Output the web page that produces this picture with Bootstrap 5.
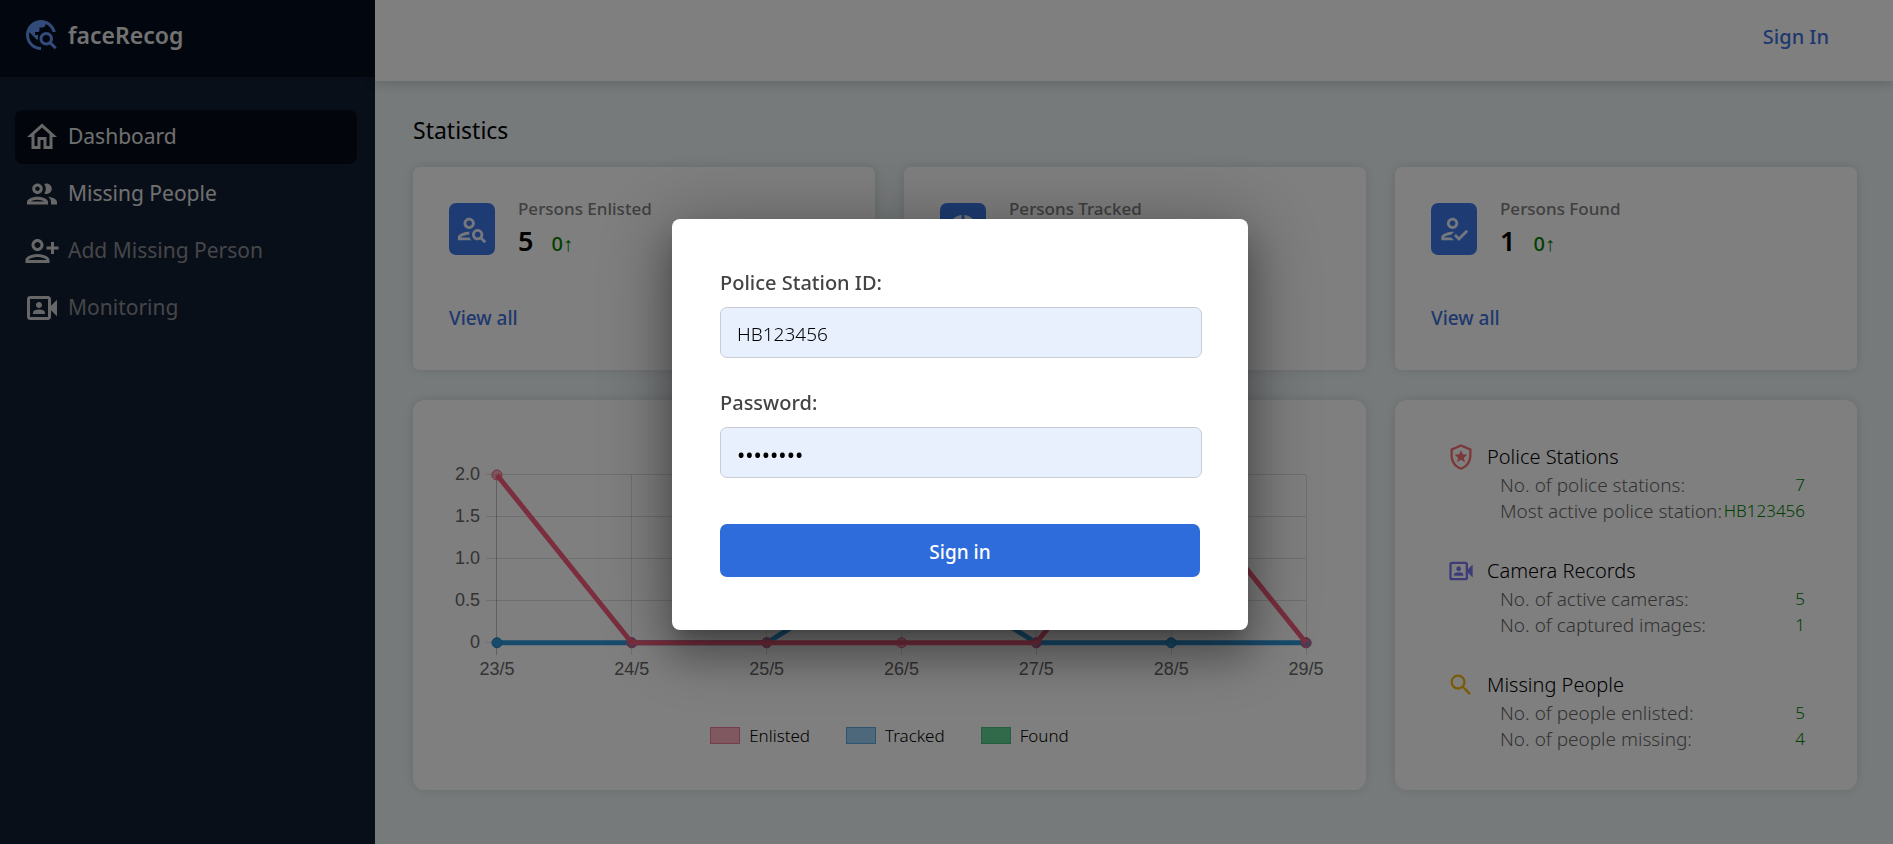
<!DOCTYPE html>
<html lang="en">
<head>
<meta charset="utf-8">
<meta name="viewport" content="width=device-width, initial-scale=1">
<title>faceRecog</title>
<link href="https://cdn.jsdelivr.net/npm/bootstrap@5.3.0/dist/css/bootstrap.min.css" rel="stylesheet">
<style>
  :root { --accent: #2f6cdb; --green: #008000; }
  body { font-family: "Noto Sans", "Open Sans", sans-serif; background: #eff5f6; color: #000; }
  a { text-decoration: none; color: #3c70dc; }
  svg.ico { width: 36px; height: 36px; fill: currentColor; flex: none; }

  .side-panel { width: 375px; background: #121e33; }
  .brand { background: #050d1c; color: #e4e4e4; padding: 17px 23px 24px; gap: 9px; font-size: 23px; line-height: 36px; font-weight: 600; }
  .brand .ico { color: #6696f0; }
  .side-nav { padding: 33px 18px 0 15px; gap: 3px; }
  .side-nav .nav-link { height: 54px; padding: 0 9px; gap: 8px; border-radius: 8px; font-size: 21px; color: #e0e0e0; }
  .side-nav .nav-link.active { background: #040b18; }
  .side-nav .nav-link.disabled { color: #8a8c91; }
  .side-nav .ico { color: #cfcfcf; }

  .top-bar { background: #fff; padding: 22px 64px 29px; font-size: 20px; line-height: 30px; font-weight: 500; box-shadow: 0 4px 10px rgba(0, 0, 0, .15); }
  .content-area { padding: 31px 36px 40px 38px; }
  .content-area h1 { font-size: 23px; font-weight: 400; line-height: 36px; margin-bottom: 19px; }
  .content-area .row { --bs-gutter-x: 29px; }
  .content-area .row + .row { margin-top: 30px; }
  .panel { background: #fff; height: 100%; box-shadow: 0 0 12px rgba(0, 0, 0, .12); }
  .stat-card { border-radius: 7px; padding: 31px 36px 38px; }
  .stat-icon { width: 46px; height: 52px; border-radius: 7px; background: #3c78e6; color: #e8eefc; }
  .stat-icon .ico { width: 34px; height: 34px; }
  .stat-head { height: 62px; gap: 23px; margin-bottom: 44px; }
  .stat-name { font-size: 17px; font-weight: 500; line-height: 24px; color: #808080; }
  .stat-num { font-size: 27px; font-weight: 600; line-height: 40px; }
  .stat-delta { font-size: 20px; font-weight: 500; line-height: 30px; color: var(--green); margin-left: 18px; }
  .stat-card a { display: block; width: max-content; font-size: 19px; font-weight: 500; line-height: 28px; }

  .big-card { border-radius: 12px; }
  .chart-card { padding: 36px 36px 42px; }
  .chart-card svg text { font: 18px "Liberation Sans", Arial, sans-serif; fill: #666; }
  .legend-list { margin-top: 34px; gap: 36px; font-size: 17px; font-weight: 300; line-height: 24px; }
  .legend-list li { gap: 9px; }
  .swatch { width: 30px; height: 17px; border: 1px solid; }
  .swatch-red { background: #ffb1c1; border-color: #e87f95; }
  .swatch-blue { background: #9ad0f5; border-color: #5fa9da; }
  .swatch-green { background: #63d297; border-color: #4aba7f; }

  .summary-card { padding: 42px 52px 38px; gap: 32px; }
  .summary-card .ico { width: 28px; height: 28px; }
  .summary-card h2 { font-size: 20px; font-weight: 300; line-height: 30px; gap: 12px; margin: 0; }
  .summary-card dl { padding-left: 53px; margin: 0; }
  .summary-card dt { font-size: 19px; font-weight: 300; line-height: 26px; color: #666; white-space: nowrap; }
  .summary-card dd { font-size: 17px; font-weight: 300; line-height: 26px; color: var(--green); margin: 0; }

  .login-modal { padding: 5px 0 0 27px; }
  .login-modal .modal-dialog { max-width: 576px; }
  .login-modal .modal-content { border: 0; border-radius: 8px; padding: 48px 48px 53px; box-shadow: 0 11px 15px -7px rgba(0, 0, 0, .2), 0 24px 38px 3px rgba(0, 0, 0, .25), 0 9px 70px 12px rgba(0, 0, 0, .25); }
  .login-modal label { font-size: 20px; font-weight: 500; line-height: 32px; margin-bottom: 8px; color: #444; }
  .login-modal .form-control { width: calc(100% + 2px); height: 51px; padding: 2px 16px 0; border: 1px solid #c8ccd4; border-radius: 7px; background: #e8effd; color: #000; font-size: 19px; font-weight: 300; }
  .login-modal .form-control[type="password"] { font-size: 22px; font-weight: 400; }
  .login-modal .mb-field { margin-bottom: 29px; }
  .login-modal .btn { height: 53px; margin-top: 46px; padding: 4px 12px 0; border: 0; border-radius: 7px; background: var(--accent); color: #fff; font-size: 19px; font-weight: 500; }
</style>
</head>
<body>
<svg class="d-none" xmlns="http://www.w3.org/2000/svg">
  <symbol id="i-explore" viewBox="0 0 24 24"><path d="M19.3 16.9c.4-.7.7-1.5.7-2.4 0-2.5-2-4.5-4.5-4.5S11 12 11 14.5s2 4.5 4.5 4.5c.9 0 1.7-.3 2.4-.7l3.2 3.2 1.4-1.4-3.2-3.2zm-3.8.1c-1.4 0-2.5-1.1-2.5-2.5s1.1-2.5 2.5-2.5 2.5 1.1 2.5 2.5-1.1 2.5-2.5 2.5zM12 20v2C6.48 22 2 17.52 2 12S6.48 2 12 2c4.84 0 8.87 3.44 9.8 8h-2.07c-.64-2.46-2.4-4.47-4.73-5.41V5c0 1.1-.9 2-2 2h-2v2c0 .55-.45 1-1 1H8v2h2v3H9l-4.79-4.79C4.08 10.79 4 11.38 4 12c0 4.41 3.59 8 8 8z"/></symbol>
  <symbol id="i-home" viewBox="0 0 24 24"><path d="M12 5.69l5 4.5V18h-2v-6H9v6H7v-7.81l5-4.5M12 3L2 12h3v8h6v-6h2v6h6v-8h3L12 3z"/></symbol>
  <symbol id="i-group" viewBox="0 0 24 24"><path d="M9 13.75c-2.34 0-7 1.17-7 3.5V19h14v-1.75c0-2.33-4.66-3.5-7-3.5zM4.34 17c.84-.58 2.87-1.25 4.66-1.25s3.82.67 4.66 1.25H4.34zM9 12c1.93 0 3.5-1.57 3.5-3.5S10.93 5 9 5 5.5 6.57 5.5 8.5 7.07 12 9 12zm0-5c.83 0 1.5.67 1.5 1.5S9.83 10 9 10s-1.5-.67-1.5-1.5S8.17 7 9 7zm7.04 6.81c1.16.84 1.96 1.96 1.96 3.44V19h4v-1.75c0-2.02-3.5-3.17-5.96-3.44zM15 12c1.93 0 3.5-1.57 3.5-3.5S16.93 5 15 5c-.54 0-1.04.13-1.5.35.63.89 1 1.98 1 3.15s-.37 2.26-1 3.15c.46.22.96.35 1.5.35z"/></symbol>
  <symbol id="i-add" viewBox="0 0 24 24"><path d="M13 8c0-2.21-1.79-4-4-4S5 5.79 5 8s1.79 4 4 4 4-1.79 4-4zm-2 0c0 1.1-.9 2-2 2s-2-.9-2-2 .9-2 2-2 2 .9 2 2zM1 18v2h16v-2c0-2.66-5.33-4-8-4s-8 1.34-8 4zm2 0c.2-.71 3.3-2 6-2 2.69 0 5.77 1.28 6 2H3zM20 14v-3h3V9h-3V6h-2v3h-3v2h3v3h2z"/></symbol>
  <symbol id="i-video" viewBox="0 0 24 24"><path d="M18 10.48V6c0-1.1-.9-2-2-2H4c-1.1 0-2 .9-2 2v12c0 1.1.9 2 2 2h12c1.1 0 2-.9 2-2v-4.48l4 3.98v-11l-4 3.98zM16 9.69V18H4V6h12v3.69zM10 12c1.1 0 2-.9 2-2s-.9-2-2-2-2 .9-2 2 .9 2 2 2zm4 3.43c0-.81-.48-1.53-1.22-1.85C11.93 13.21 10.99 13 10 13s-1.93.21-2.78.58C6.48 13.9 6 14.62 6 15.43V16h8v-.57z"/></symbol>
  <symbol id="i-search-person" viewBox="0 0 24 24"><path d="M10 12c2.21 0 4-1.79 4-4s-1.79-4-4-4-4 1.79-4 4 1.79 4 4 4zm0-6c1.1 0 2 .9 2 2s-.9 2-2 2-2-.9-2-2 .9-2 2-2zM4 18c.22-.72 3.31-2 6-2 0-.7.13-1.37.35-1.99C7.62 13.91 2 15.27 2 18v2h9.54c-.52-.58-.93-1.25-1.19-2H4zM19.43 18.02c.36-.59.57-1.28.57-2.02 0-2.21-1.79-4-4-4s-4 1.79-4 4 1.79 4 4 4c.74 0 1.43-.22 2.02-.57L20.59 22 22 20.59l-2.57-2.57zM16 18c-1.1 0-2-.9-2-2s.9-2 2-2 2 .9 2 2-.9 2-2 2z"/></symbol>
  <symbol id="i-track" viewBox="0 0 24 24"><path d="M13 2.05v3.03c3.39.49 6 3.39 6 6.92s-2.61 6.43-6 6.92v3.03c5.05-.5 9-4.76 9-9.95s-3.95-9.45-9-9.95zM11 2.05C5.95 2.55 2 6.81 2 12s3.95 9.45 9 9.95v-3.03C7.61 18.43 5 15.53 5 12s2.61-6.43 6-6.92z"/></symbol>
  <symbol id="i-found" viewBox="0 0 24 24"><path d="M11 12c2.21 0 4-1.79 4-4s-1.79-4-4-4-4 1.79-4 4 1.79 4 4 4zm0-6c1.1 0 2 .9 2 2s-.9 2-2 2-2-.9-2-2 .9-2 2-2zM5 18c.2-.63 2.57-1.68 4.96-1.94l2.04-2c-.39-.04-.68-.06-1-.06-2.67 0-8 1.34-8 4v2h9l-2-2H5zm15.6-5.5l-5.13 5.17-2.07-2.08L12 17l3.47 3.5L22 13.91z"/></symbol>
  <symbol id="i-police" viewBox="0 0 24 24"><path d="M12 1L3 5v6c0 5.55 3.84 10.74 9 12 5.16-1.26 9-6.45 9-12V5l-9-4zm7 10c0 4.52-2.98 8.69-7 9.93-4.02-1.24-7-5.41-7-9.93V6.3l7-3.11 7 3.11V11z"/><path d="M14.5 12.59l.9 3.88L12 14.42l-3.4 2.05.9-3.87-3-2.59 3.96-.34L12 6.02l1.54 3.64 3.96.34z"/></symbol>
  <symbol id="i-search" viewBox="0 0 24 24"><path d="M15.5 14h-.79l-.28-.27A6.47 6.47 0 0 0 16 9.5 6.5 6.5 0 1 0 9.5 16c1.61 0 3.09-.59 4.23-1.57l.27.28v.79l5 4.99L20.49 19l-4.99-5zm-6 0C7.01 14 5 11.99 5 9.5S7.01 5 9.5 5 14 7.01 14 9.5 11.99 14 9.5 14z"/></symbol>
</svg>

<div class="d-flex min-vh-100">
  <aside class="side-panel flex-shrink-0">
    <div class="brand d-flex align-items-center"><svg class="ico"><use href="#i-explore"/></svg><span>faceRecog</span></div>
    <nav class="side-nav nav flex-column">
      <a class="nav-link active d-flex align-items-center" href="#"><svg class="ico"><use href="#i-home"/></svg>Dashboard</a>
      <a class="nav-link d-flex align-items-center" href="#"><svg class="ico"><use href="#i-group"/></svg>Missing People</a>
      <a class="nav-link disabled d-flex align-items-center" href="#" aria-disabled="true"><svg class="ico"><use href="#i-add"/></svg>Add Missing Person</a>
      <a class="nav-link disabled d-flex align-items-center" href="#" aria-disabled="true"><svg class="ico"><use href="#i-video"/></svg>Monitoring</a>
    </nav>
  </aside>

  <div class="flex-grow-1">
    <header class="top-bar d-flex justify-content-end"><a href="#">Sign In</a></header>
    <main class="content-area">
      <h1>Statistics</h1>
      <div class="row">
        <div class="col-4">
          <section class="panel stat-card">
            <div class="stat-head d-flex align-items-center">
              <div class="stat-icon d-flex align-items-center justify-content-center"><svg class="ico"><use href="#i-search-person"/></svg></div>
              <div><div class="stat-name">Persons Enlisted</div><div class="stat-num">5<span class="stat-delta">0↑</span></div></div>
            </div>
            <a href="#">View all</a>
          </section>
        </div>
        <div class="col-4">
          <section class="panel stat-card">
            <div class="stat-head d-flex align-items-center">
              <div class="stat-icon d-flex align-items-center justify-content-center"><svg class="ico"><use href="#i-track"/></svg></div>
              <div><div class="stat-name">Persons Tracked</div><div class="stat-num">1<span class="stat-delta">0↑</span></div></div>
            </div>
            <a href="#">View all</a>
          </section>
        </div>
        <div class="col-4">
          <section class="panel stat-card">
            <div class="stat-head d-flex align-items-center">
              <div class="stat-icon d-flex align-items-center justify-content-center"><svg class="ico"><use href="#i-found"/></svg></div>
              <div><div class="stat-name">Persons Found</div><div class="stat-num">1<span class="stat-delta">0↑</span></div></div>
            </div>
            <a href="#">View all</a>
          </section>
        </div>
      </div>

      <div class="row">
        <div class="col-8">
          <section class="panel big-card chart-card">
            <svg class="d-block w-100" viewBox="0 0 882 254" role="img" aria-label="Persons enlisted and tracked per day">
              <g stroke="#000" stroke-opacity=".13" stroke-width="1" shape-rendering="crispEdges">
                <path d="M37 39H858M37 81H858M37 123H858M37 165H858M37 207H858"/>
                <path d="M183 39V219M318 39V219M453 39V219M588 39V219M723 39V219M858 39V219"/>
                <path stroke-opacity=".25" d="M48 39V219"/>
              </g>
              <g text-anchor="end">
                <text x="31" y="44">2.0</text><text x="31" y="86">1.5</text><text x="31" y="128">1.0</text><text x="31" y="170">0.5</text><text x="31" y="212">0</text>
              </g>
              <g text-anchor="middle">
                <text x="48" y="239">23/5</text><text x="183" y="239">24/5</text><text x="318" y="239">25/5</text><text x="453" y="239">26/5</text><text x="588" y="239">27/5</text><text x="723" y="239">28/5</text><text x="858" y="239">29/5</text>
              </g>
              <g stroke="#2e96d8" fill="#2e96d8">
                <path fill="none" stroke-width="5" stroke-linejoin="round" d="M48 207H318L453 123L588 207H858"/>
                <g stroke="#2580bd"><circle cx="48" cy="207" r="5"/><circle cx="183" cy="207" r="5"/><circle cx="318" cy="207" r="5"/><circle cx="453" cy="123" r="5"/><circle cx="588" cy="207" r="5"/><circle cx="723" cy="207" r="5"/><circle cx="858" cy="207" r="5"/></g>
              </g>
              <g stroke="#f55c7c" fill="#f55c7c">
                <path fill="none" stroke-width="5" stroke-linejoin="round" d="M48 39L183 207H588L723 39L858 207"/>
                <g fill-opacity=".5"><circle cx="48" cy="39" r="5"/><circle cx="183" cy="207" r="5"/><circle cx="318" cy="207" r="5"/><circle cx="453" cy="207" r="5"/><circle cx="588" cy="207" r="5"/><circle cx="723" cy="39" r="5"/><circle cx="858" cy="207" r="5"/></g>
              </g>
            </svg>
            <ul class="legend-list list-unstyled d-flex justify-content-center mb-0">
              <li class="d-flex align-items-center"><span class="swatch swatch-red"></span>Enlisted</li>
              <li class="d-flex align-items-center"><span class="swatch swatch-blue"></span>Tracked</li>
              <li class="d-flex align-items-center"><span class="swatch swatch-green"></span>Found</li>
            </ul>
          </section>
        </div>
        <div class="col-4">
          <section class="panel big-card summary-card d-flex flex-column">
            <div>
              <h2 class="d-flex align-items-center"><svg class="ico" color="#f87171"><use href="#i-police"/></svg>Police Stations</h2>
              <dl>
                <div class="d-flex justify-content-between"><dt>No. of police stations:</dt><dd>7</dd></div>
                <div class="d-flex justify-content-between"><dt>Most active police station:</dt><dd>HB123456</dd></div>
              </dl>
            </div>
            <div>
              <h2 class="d-flex align-items-center"><svg class="ico" color="#7c78f0"><use href="#i-video"/></svg>Camera Records</h2>
              <dl>
                <div class="d-flex justify-content-between"><dt>No. of active cameras:</dt><dd>5</dd></div>
                <div class="d-flex justify-content-between"><dt>No. of captured images:</dt><dd>1</dd></div>
              </dl>
            </div>
            <div>
              <h2 class="d-flex align-items-center"><svg class="ico" color="#f5b70a"><use href="#i-search"/></svg>Missing People</h2>
              <dl>
                <div class="d-flex justify-content-between"><dt>No. of people enlisted:</dt><dd>5</dd></div>
                <div class="d-flex justify-content-between"><dt>No. of people missing:</dt><dd>4</dd></div>
              </dl>
            </div>
          </section>
        </div>
      </div>
    </main>
  </div>
</div>

<div class="modal-backdrop show"></div>
<div class="modal login-modal show d-block" tabindex="-1" role="dialog" aria-modal="true" aria-label="Sign in">
  <div class="modal-dialog modal-dialog-centered">
    <form class="modal-content">
      <label for="station">Police Station ID:</label>
      <input class="form-control mb-field" id="station" type="text" value="HB123456">
      <label for="pass">Password:</label>
      <input class="form-control" id="pass" type="password" value="password" autocomplete="off">
      <button class="btn w-100" type="button">Sign in</button>
    </form>
  </div>
</div>
<script src="https://cdn.jsdelivr.net/npm/bootstrap@5.3.0/dist/js/bootstrap.bundle.min.js"></script>
</body>
</html>
